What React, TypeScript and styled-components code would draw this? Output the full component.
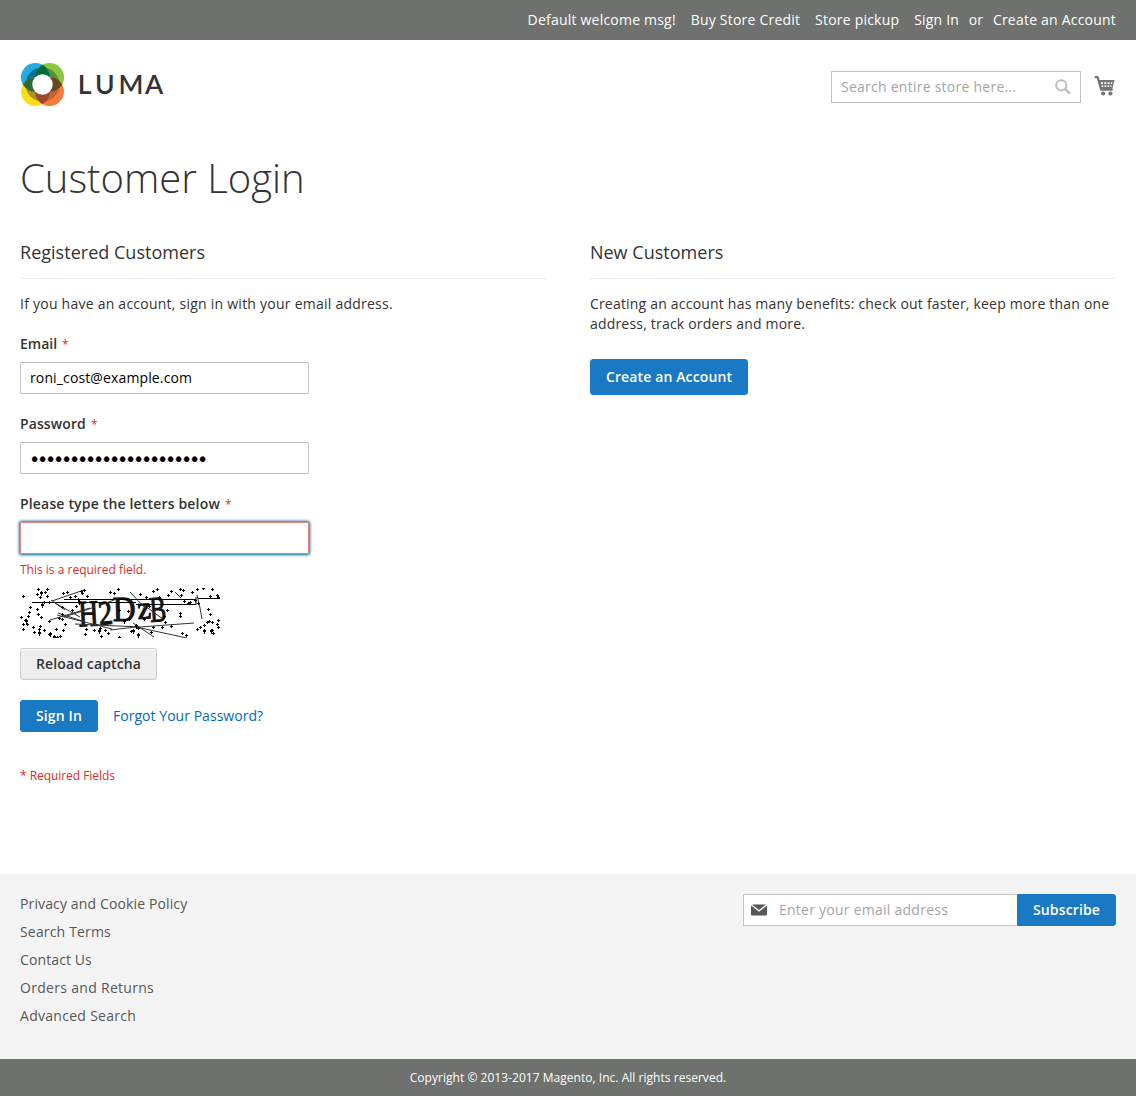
import React from "react";
import styled, { createGlobalStyle, css } from "styled-components";

const GlobalStyle = createGlobalStyle`
  *, *::before, *::after { box-sizing: border-box; }
  body {
    margin: 0;
    background: #fff;
    color: #333;
    font: 400 14px/20px "Open Sans", "Noto Sans", sans-serif;
  }
  a { text-decoration: none; }
`;

const Page = styled.div`
  min-height: 1096px;
  display: flex;
  flex-direction: column;
`;

const TopPanel = styled.nav`
  height: 40px;
  padding: 0 20px;
  display: flex;
  align-items: center;
  justify-content: flex-end;
  gap: 14.9px;
  background: #6e716e;
  color: #fff;
  letter-spacing: 0.21px;
`;

const TopLink = styled.a`
  color: #fff;
`;

const AuthLinks = styled.span`
  display: flex;
  gap: 9.6px;
`;

const Header = styled.header`
  display: flex;
  justify-content: space-between;
  align-items: flex-start;
  height: 116px;
  padding: 22px 20px 0;
`;

const HeaderTools = styled.div`
  display: flex;
  align-items: flex-start;
  gap: 13px;
  padding-top: 9px;
  & > svg { margin-top: 4px; }
`;

const SearchBox = styled.label`
  width: 250px;
  height: 32px;
  padding: 0 9px;
  display: flex;
  align-items: center;
  border: 1px solid #c2c2c2;
  background: #fff;
`;

const BareInput = styled.input`
  flex: 1;
  min-width: 0;
  padding: 0;
  border: 0;
  outline: 0;
  background: none;
  font: inherit;
  letter-spacing: 0.25px;
  color: #333;
  &::placeholder { color: #a5a5a5; opacity: 1; }
`;

const Main = styled.main`
  padding: 0 20px;
  flex: 1;
`;

const PageTitle = styled.h1`
  margin: 0 0 40px;
  font-size: 40px;
  line-height: 44px;
  font-weight: 300;
`;

const Columns = styled.div`
  display: grid;
  grid-template-columns: 48% 48%;
  justify-content: space-between;
`;

const BlockTitle = styled.h2`
  margin: 0 0 15px;
  height: 39px;
  border-bottom: 1px solid #e8e8e8;
  font-size: 18px;
  line-height: 25px;
  font-weight: 400;
  letter-spacing: 0.02px;
`;

const Paragraph = styled.p<{ $track?: number }>`
  margin: 0 0 20px;
  letter-spacing: ${(p) => p.$track ?? 0.2}px;
`;

const Form = styled.form`
  display: flex;
  flex-direction: column;
  align-items: flex-start;
`;

const Field = styled.div`
  display: flex;
  flex-direction: column;
  margin-bottom: 20px;
`;

const Label = styled.label<{ $track?: number }>`
  height: 20px;
  margin-bottom: 8px;
  font-weight: 600;
  letter-spacing: ${(p) => p.$track ?? 0}px;
`;

const Star = styled.span`
  margin-left: 5px;
  color: #e02b27;
  font-size: 12px;
  line-height: 1;
  font-weight: 400;
`;

const TextInput = styled.input<{ $invalid?: boolean }>`
  width: 289px;
  height: 32px;
  padding: 0 9px;
  border: 1px solid ${(p) => (p.$invalid ? "#ed8380" : "#c2c2c2")};
  border-radius: 1px;
  outline: 0;
  background: #fff;
  color: #000;
  font: inherit;
  letter-spacing: 0.13px;
  padding-bottom: 1px;
  ${(p) => p.$invalid && css`box-shadow: 0 0 3px 1px #00699d;`}
  &[type="password"] {
    font-family: "DejaVu Sans", sans-serif;
    font-size: 19px;
    letter-spacing: -3.21px;
    padding: 1px 8px 0;
  }
`;

const ErrorText = styled.div`
  margin: 8px 0 10px;
  color: #e02b27;
  font-size: 12px;
  line-height: 16px;
`;

const Button = styled.button<{ $kind?: "primary" | "plain"; $tall?: boolean; $joined?: boolean }>`
  height: ${(p) => (p.$tall ? 36 : 32)}px;
  padding: 0 15px;
  border: 1px solid #1979c3;
  border-radius: ${(p) => (p.$joined ? "0 3px 3px 0" : "3px")};
  background: #1979c3;
  color: #fff;
  font: inherit;
  font-weight: 600;
  letter-spacing: 0.13px;
  white-space: nowrap;
  ${(p) => p.$kind === "plain" && css`
    background: #eee;
    border-color: #cdcdcd;
    color: #333;
    box-shadow: inset 0 1px 0 0 #fff, inset 0 -1px 0 0 rgba(204, 204, 204, 0.3);
  `}
`;

const Actions = styled.div`
  display: flex;
  align-items: center;
  gap: 15px;
  margin-top: 20px;
`;

const ForgotLink = styled.a`
  color: #006bb4;
  letter-spacing: 0.04px;
`;

const RequiredNote = styled.div`
  margin-top: 34px;
  color: #e02b27;
  font-size: 12px;
  letter-spacing: -0.05px;
`;

const CreateRow = styled.div`
  padding-top: 5px;
`;

const Captcha = styled.svg`
  display: block;
  margin-bottom: 10px;
`;

const Footer = styled.footer`
  display: flex;
  align-items: flex-start;
  justify-content: space-between;
  height: 185px;
  padding: 20px 20px 0;
  background: #f4f4f4;
`;

const FooterLinks = styled.ul`
  display: flex;
  flex-direction: column;
  gap: 8px;
  margin: 0;
  padding: 0;
  list-style: none;
`;

const FooterLink = styled.a<{ $track: number }>`
  color: #575757;
  letter-spacing: ${(p) => p.$track}px;
`;

const Newsletter = styled.form`
  display: flex;
  width: 373px;
`;

const EmailBox = styled.label`
  flex: 1;
  min-width: 0;
  height: 32px;
  display: flex;
  align-items: center;
  gap: 12px;
  padding-left: 7px;
  border: 1px solid #c2c2c2;
  border-right: 0;
  background: #fff;
`;

const Copyright = styled.small`
  height: 37px;
  display: flex;
  align-items: center;
  justify-content: center;
  background: #6e716e;
  color: #fff;
  font-size: 12px;
  letter-spacing: 0.03px;
`;

const Logo = () => (
  <svg width="148" height="46" viewBox="20 62 148 46" aria-label="LUMA">
    <defs>
      <clipPath id="tl"><circle cx="35.4" cy="77.4" r="14.4" /></clipPath>
      <clipPath id="tr"><circle cx="49.6" cy="77.4" r="14.4" /></clipPath>
      <clipPath id="bl"><circle cx="35.4" cy="91.6" r="14.4" /></clipPath>
      <clipPath id="br"><circle cx="49.6" cy="91.6" r="14.4" /></clipPath>
    </defs>
    <circle cx="35.4" cy="77.4" r="14.4" fill="#27a9e1" />
    <circle cx="49.6" cy="77.4" r="14.4" fill="#8cc63f" />
    <circle cx="35.4" cy="91.6" r="14.4" fill="#ffde17" />
    <circle cx="49.6" cy="91.6" r="14.4" fill="#f47b3c" />
    <circle cx="42.5" cy="84.5" r="17" fill="#0e7098" clipPath="url(#tl)" />
    <circle cx="42.5" cy="84.5" r="17" fill="#59903a" clipPath="url(#tr)" />
    <circle cx="42.5" cy="84.5" r="17" fill="#ab9334" clipPath="url(#bl)" />
    <circle cx="42.5" cy="84.5" r="17" fill="#bc653a" clipPath="url(#br)" />
    <g clipPath="url(#tl)">
      <circle cx="49.6" cy="77.4" r="14.4" fill="#006b3b" />
      <circle cx="35.4" cy="91.6" r="14.4" fill="#2d6a35" />
    </g>
    <g clipPath="url(#br)">
      <circle cx="35.4" cy="91.6" r="14.4" fill="#9f4825" />
      <circle cx="49.6" cy="77.4" r="14.4" fill="#664820" />
    </g>
    <circle cx="42.5" cy="84.5" r="10.2" fill="#fff" />
    <text y="93.8" x="77.8 95.1 118.6 144.9" fontFamily="Lato, sans-serif" fontSize="26.6" fontWeight="600" fill="#333">LUMA</text>
  </svg>
);

const SearchIcon = () => (
  <svg width="16" height="16" viewBox="0 0 16 16" fill="none" stroke="#bdbdbd">
    <circle cx="6.3" cy="6.3" r="5.1" strokeWidth="2" />
    <path d="M10.2 10.2 15 14.6" strokeWidth="2.5" />
  </svg>
);

const CartIcon = () => (
  <svg width="22" height="22" viewBox="0 0 22 22">
    <path d="M1.6 2.2H3.7L7.2 14.6H17.8" fill="none" stroke="#757575" strokeWidth="2.3" strokeLinejoin="round" strokeLinecap="round" />
    <path d="M4.4 5H20.6L18.3 14H6.7Z" fill="#757575" />
    <path d="M6.9 8.1H8.9M10.3 8.1h2M13.6 8.1h2M16.8 8.1h1.5M7.6 11.2h1.7M10.5 11.2H12.3M13.6 11.2H15.2M16.4 11.2h1.1" stroke="#fff" strokeWidth="1.8" />
    <circle cx="9.2" cy="18.5" r="2.1" fill="#757575" />
    <circle cx="16.4" cy="18.5" r="2.1" fill="#757575" />
  </svg>
);

const MailIcon = () => (
  <svg width="16" height="12" viewBox="0 0 16 12" fill="#575757">
    <path d="M1 0.5H15L8 5.9Z" />
    <path d="M0 1.6 8 7.7 16 1.6V10.5Q16 11.5 15 11.5H1Q0 11.5 0 10.5Z" />
  </svg>
);

const specks: number[][] = [
  [3,8],[18,1],[17,6],[20,9],[27,1],[25,4],[27,8],[10,19],[9,24],[17,21],[18,26],[21,29],[8,28],[1,29],[5,32],[3,36],[7,36],[3,41],
  [13,39],[14,44],[19,41],[20,38],[24,42],[29,46],[36,41],[37,49],[40,48],[43,42],[45,36],[39,30],[29,33],[42,31],[42,26],
  [42,19],[56,18],[52,22],[29,14],[24,14],[43,5],[47,4],[50,9],[55,8],[61,3],[64,2],[67,8],[58,11],[62,5],[65,46],
  [66,41],[74,42],[80,40],[85,42],[88,45],[81,48],[99,49],[111,43],[90,4],[98,1],[94,5],[99,22],[108,23],[112,25],[109,31],[120,6],
  [126,9],[133,3],[137,1],[139,9],[148,7],[151,3],[160,1],[163,2],[161,7],[172,4],[177,1],[183,0],[192,1],[190,8],[197,7],[198,9],[164,13],
  [168,15],[170,14],[175,12],[178,15],[160,25],[160,28],[147,22],[144,28],[145,34],[142,39],[151,38],[162,45],[166,47],[177,41],[188,21],
  [190,26],[189,33],[184,37],[187,34],[192,34],[180,39],[193,45],[192,42],[197,36],[198,32],[198,39],[131,44],[133,39],[124,31],[129,18],[118,40]
];
const clumps: number[][] = [[21,5],[6,33],[22,17],[19,45],[30,46],[34,49],[104,33],[79,43],[184,43],[113,43],[59,14],[118,47],[116,38],[191,43]];

const CaptchaImage = () => (
  <Captcha width="200" height="50" viewBox="0 0 200 50">
    <g fontFamily="Liberation Serif, serif" fill="#151515" stroke="#151515" strokeWidth="1.1">
      <text fontSize="37" transform="translate(59 38.5) rotate(-3) scale(.75 1)">H</text>
      <text fontSize="34" transform="translate(79.5 37) rotate(-6) scale(.83 1)">2</text>
      <text fontSize="35" transform="translate(93 33) rotate(-1) scale(.9 1)">D</text>
      <text fontSize="32" transform="translate(118 31) rotate(-4) scale(.95 1)">z</text>
      <text fontSize="36" transform="translate(130.5 34) rotate(-4) scale(.68 1)">B</text>
    </g>
    <g fill="none" stroke="#333" strokeWidth="1">
      <path d="M12 14.5H48M44 11.5H176M178 10.5H200M36 14.5H116M116 16.5H165" stroke="#000" />
      <path d="M32 13 64 2M35 15 60 29M31 12 45 22M38 25 65 34M30 32 70 20M44 29 75 19M37 27 92 41M55 36 120 39 174 35M90 42 116 39 167 50M113 35 134 49M81 17 99 10M110 4 125 20M125 18 143 31M155 4 161 10M177 7 180 20 182 31" />
      <path d="M176 17V9M164 16.5H176" stroke="#000" />
    </g>
    <g fill="#000" shapeRendering="crispEdges">
      {specks.map(([x, y], i) => <path key={i} d={`M${x - 1} ${y}h3v1h-3zM${x} ${y - 1}h1v3h-1z`} />)}
      {clumps.map(([x, y], i) => <path key={i} d={`M${x - 1} ${y - 1}h3v2h-3zM${x} ${y - 2}h1v5h-1z`} />)}
    </g>
  </Captcha>
);

const footerItems: { label: string; track: number }[] = [
  { label: "Privacy and Cookie Policy", track: 0.13 },
  { label: "Search Terms", track: 0.17 },
  { label: "Contact Us", track: 0.11 },
  { label: "Orders and Returns", track: 0.3 },
  { label: "Advanced Search", track: 0.29 },
];

export default function App() {
  return (
    <Page>
      <GlobalStyle />
      <TopPanel>
        <span>Default welcome msg!</span>
        <TopLink>Buy Store Credit</TopLink>
        <TopLink>Store pickup</TopLink>
        <AuthLinks>
          <TopLink>Sign In</TopLink>
          <span>or</span>
          <TopLink>Create an Account</TopLink>
        </AuthLinks>
      </TopPanel>
      <Header>
        <Logo />
        <HeaderTools>
          <SearchBox>
            <BareInput placeholder="Search entire store here..." />
            <SearchIcon />
          </SearchBox>
          <CartIcon />
        </HeaderTools>
      </Header>
      <Main>
        <PageTitle>Customer Login</PageTitle>
        <Columns>
          <section>
            <BlockTitle>Registered Customers</BlockTitle>
            <Form>
              <Paragraph $track={0.24}>If you have an account, sign in with your email address.</Paragraph>
              <Field>
                <Label>Email<Star>*</Star></Label>
                <TextInput defaultValue="roni_cost@example.com" />
              </Field>
              <Field>
                <Label $track={0.1}>Password<Star>*</Star></Label>
                <TextInput type="password" defaultValue="roni_cost3@example.com" />
              </Field>
              <Field>
                <Label $track={0.17}>Please type the letters below<Star>*</Star></Label>
                <TextInput $invalid />
                <ErrorText>This is a required field.</ErrorText>
                <CaptchaImage />
                <div><Button type="button" $kind="plain">Reload captcha</Button></div>
                <Actions>
                  <Button type="button">Sign In</Button>
                  <ForgotLink>Forgot Your Password?</ForgotLink>
                </Actions>
                <RequiredNote>* Required Fields</RequiredNote>
              </Field>
            </Form>
          </section>
          <section>
            <BlockTitle>New Customers</BlockTitle>
            <Paragraph>
              Creating an account has many benefits: check out faster, keep more than one address, track orders and more.
            </Paragraph>
            <CreateRow><Button type="button" $tall>Create an Account</Button></CreateRow>
          </section>
        </Columns>
      </Main>
      <Footer>
        <FooterLinks>
          {footerItems.map((item) => (
            <li key={item.label}><FooterLink $track={item.track}>{item.label}</FooterLink></li>
          ))}
        </FooterLinks>
        <Newsletter>
          <EmailBox>
            <MailIcon />
            <BareInput placeholder="Enter your email address" />
          </EmailBox>
          <Button type="button" $joined>Subscribe</Button>
        </Newsletter>
      </Footer>
      <Copyright>Copyright © 2013-2017 Magento, Inc. All rights reserved.</Copyright>
    </Page>
  );
}
